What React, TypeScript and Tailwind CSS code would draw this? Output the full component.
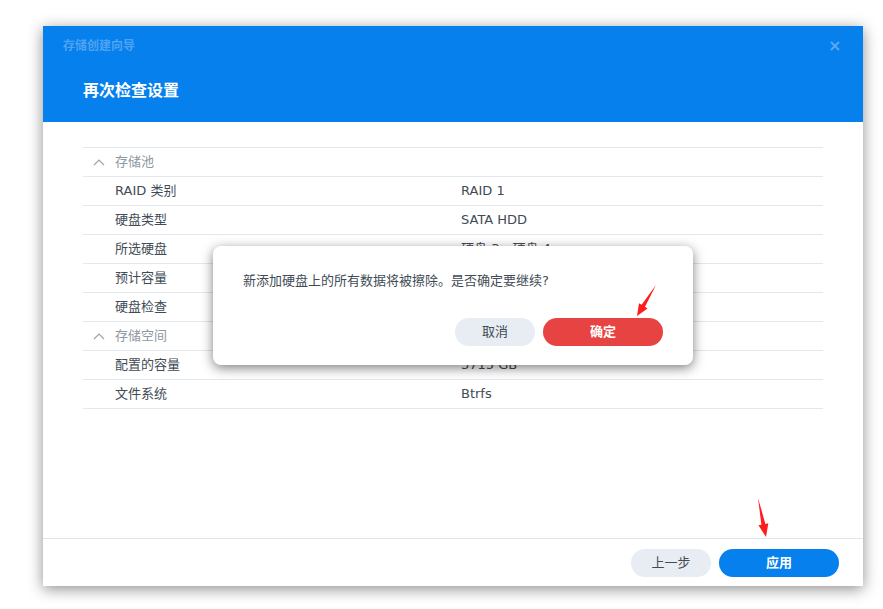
import React from "react";

const font = { fontFamily: '"DejaVu Sans", "Noto Sans CJK SC", sans-serif' };

type Row = { label: string; value?: string; section?: boolean };

const rows: Row[] = [
  { label: "存储池", section: true },
  { label: "RAID 类别", value: "RAID 1" },
  { label: "硬盘类型", value: "SATA HDD" },
  { label: "所选硬盘", value: "硬盘 3，硬盘 4" },
  { label: "预计容量", value: "3.63 TB" },
  { label: "硬盘检查", value: "否" },
  { label: "存储空间", section: true },
  { label: "配置的容量", value: "3715 GB" },
  { label: "文件系统", value: "Btrfs" },
];

function Chevron() {
  return (
    <svg width="12" height="8" viewBox="0 0 12 8" className="mr-[10px] ml-[10px]">
      <path d="M1 7 L6 2 L11 7" fill="none" stroke="#9aa4ae" strokeWidth="1.2" />
    </svg>
  );
}

export default function App() {
  return (
    <div className="relative w-[883px] h-[609px] bg-white overflow-hidden" style={font}>
      <div className="pt-[26px] pl-[43px]">
        <div className="w-[820px] h-[560px] bg-white flex flex-col shadow-[0_3px_14px_rgba(0,0,0,0.45)]">
          {/* header */}
          <div className="h-[96px] bg-[#0580ec] flex flex-col relative">
            <div className="h-[40px] flex items-center pl-[20px] text-[12px] font-bold text-[#4fa3f2]">
              存储创建向导
            </div>
            <div className="pl-[40px] pt-[14px] text-[16px] font-bold text-white leading-[22px]">
              再次检查设置
            </div>
            <svg className="absolute right-[23px] top-[15px]" width="10" height="10" viewBox="0 0 10 10">
              <path d="M1 1 L9 9 M9 1 L1 9" stroke="#5aa8f3" strokeWidth="2" />
            </svg>
          </div>
          {/* body */}
          <div className="h-[416px] px-[40px] pt-[25px]">
            <div className="border-t border-[#e3e8ee]">
              {rows.map((r, i) => (
                <div key={i} className="h-[29px] flex items-center border-b border-[#e3e8ee] text-[13px]">
                  {r.section ? (
                    <div className="flex items-center text-[#8e98a2]">
                      <Chevron />
                      <span>{r.label}</span>
                    </div>
                  ) : (
                    <>
                      <div className="w-[378px] pl-[32px] text-[#414b55]">{r.label}</div>
                      <div className="text-[#414b55]">{r.value}</div>
                    </>
                  )}
                </div>
              ))}
            </div>
          </div>
          {/* footer */}
          <div className="flex-1 border-t border-[#dfe5ec] flex items-center justify-end pr-[24px] gap-[8px]">
            <button className="w-[80px] h-[28px] rounded-full bg-[#e8edf3] text-[13px] text-[#414b55]">上一步</button>
            <button className="w-[120px] h-[28px] rounded-full bg-[#0580ec] text-[13px] font-bold text-white">应用</button>
          </div>
        </div>
      </div>

      {/* confirm modal */}
      <div className="absolute left-[213px] top-[246px] w-[480px] h-[119px] bg-white rounded-[8px] shadow-[0_3px_12px_rgba(0,0,0,0.5)] flex flex-col px-[30px] pt-[25px] pb-[19px]">
        <div className="text-[13px] text-[#414b55] leading-[20px]">新添加硬盘上的所有数据将被擦除。是否确定要继续?</div>
        <div className="flex-1" />
        <div className="flex justify-end gap-[8px]">
          <button className="w-[80px] h-[28px] rounded-full bg-[#e8edf3] text-[13px] text-[#414b55]">取消</button>
          <button className="w-[120px] h-[28px] rounded-full bg-[#e84343] text-[13px] font-bold text-white">确定</button>
        </div>
      </div>

      {/* annotation arrows */}
      <svg className="absolute left-0 top-0 pointer-events-none" width="883" height="609">
        <polygon points="656,285 645,306.8 647.5,308.4 637,316 639,303.2 641.6,304.7" fill="#ff1c1c" />
        <polygon points="758,498 765.4,523.9 768.3,523.3 766,537 758.5,525.3 761.4,524.7" fill="#ff1c1c" />
      </svg>
    </div>
  );
}
